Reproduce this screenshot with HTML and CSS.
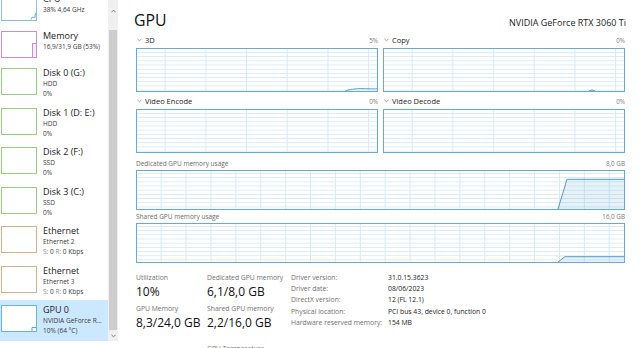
FILE: index.html
```html
<!DOCTYPE html>
<html>
<head>
<meta charset="utf-8">
<title>Task Manager - GPU</title>
<link rel="stylesheet" href="styles.css">
</head>
<body>
<div class="app">
  <aside class="sidebar">
    <div class="list">
      <div class="item short">
        <div class="thumb cpu"><svg viewBox="0 0 34 25"><polyline points="29,24.5 30,22.3 33,22.3 33.5,18"/></svg></div>
        <div class="txt"><div class="ttl">CPU</div><div class="sub">38% 4,64 GHz</div></div>
      </div>
      <div class="item mid">
        <div class="thumb mem"><svg viewBox="0 0 34 25"><rect x="30.5" y="11.5" width="4" height="14"/></svg></div>
        <div class="txt"><div class="ttl">Memory</div><div class="sub">16,9/31,9 GB (53%)</div></div>
      </div>
      <div class="item">
        <div class="thumb disk"></div>
        <div class="txt"><div class="ttl">Disk 0 (G:)</div><div class="sub">HDD</div><div class="sub">0%</div></div>
      </div>
      <div class="item">
        <div class="thumb disk"></div>
        <div class="txt"><div class="ttl">Disk 1 (D: E:)</div><div class="sub">HDD</div><div class="sub">0%</div></div>
      </div>
      <div class="item">
        <div class="thumb disk"></div>
        <div class="txt"><div class="ttl">Disk 2 (F:)</div><div class="sub">SSD</div><div class="sub">0%</div></div>
      </div>
      <div class="item">
        <div class="thumb disk"></div>
        <div class="txt"><div class="ttl">Disk 3 (C:)</div><div class="sub">SSD</div><div class="sub">0%</div></div>
      </div>
      <div class="item">
        <div class="thumb eth"></div>
        <div class="txt"><div class="ttl">Ethernet</div><div class="sub">Ethernet 2</div><div class="sub"><span class="dim">S:</span> 0 <span class="dim">R:</span> 0 Kbps</div></div>
      </div>
      <div class="item">
        <div class="thumb eth"></div>
        <div class="txt"><div class="ttl">Ethernet</div><div class="sub">Ethernet 3</div><div class="sub"><span class="dim">S:</span> 0 <span class="dim">R:</span> 0 Kbps</div></div>
      </div>
      <div class="item selected">
        <div class="thumb gpu"><svg viewBox="0 0 34 25"><polyline points="30,25 30,21.5 34,21.5"/></svg></div>
        <div class="txt"><div class="ttl">GPU 0</div><div class="sub">NVIDIA GeForce R...</div><div class="sub">10% (64 °C)</div></div>
      </div>
    </div>
    <div class="scrollbar">
      <div class="sb-btn up"><svg viewBox="0 0 6 4"><polyline points="0.5,3.5 3,1 5.5,3.5"/></svg></div>
      <div class="sb-track"><div class="sb-thumb"></div></div>
      <div class="sb-btn down"><svg viewBox="0 0 6 4"><polyline points="0.5,0.5 3,3 5.5,0.5"/></svg></div>
    </div>
  </aside>

  <main class="main">
    <header class="head">
      <h1 class="title">GPU</h1>
      <div class="model">NVIDIA GeForce RTX 3060 Ti</div>
    </header>

    <section class="engines">
      <div class="engine">
        <div class="elabel"><svg class="chev" viewBox="0 0 6 4"><polyline points="0.5,0.5 3,3 5.5,0.5"/></svg><span class="ename">3D</span><span class="pct">5%</span></div>
        <div class="graph"><svg class="plot" viewBox="0 0 240 42" preserveAspectRatio="none"><path class="line" d="M208 42 C212 40.5 218 39.6 226 39.7 S236 40 240 39.8"/></svg></div>
      </div>
      <div class="engine">
        <div class="elabel"><svg class="chev" viewBox="0 0 6 4"><polyline points="0.5,0.5 3,3 5.5,0.5"/></svg><span class="ename">Copy</span><span class="pct">0%</span></div>
        <div class="graph"><svg class="plot" viewBox="0 0 240 42" preserveAspectRatio="none"><path class="line" d="M205 42 L208 41 L211 42"/></svg></div>
      </div>
      <div class="engine">
        <div class="elabel"><svg class="chev" viewBox="0 0 6 4"><polyline points="0.5,0.5 3,3 5.5,0.5"/></svg><span class="ename">Video Encode</span><span class="pct">0%</span></div>
        <div class="graph"></div>
      </div>
      <div class="engine">
        <div class="elabel"><svg class="chev" viewBox="0 0 6 4"><polyline points="0.5,0.5 3,3 5.5,0.5"/></svg><span class="ename">Video Decode</span><span class="pct">0%</span></div>
        <div class="graph"></div>
      </div>
    </section>

    <section class="memgraphs">
      <div class="memblock">
        <div class="mlabel"><span>Dedicated GPU memory usage</span><span class="pct">8,0 GB</span></div>
        <div class="graph mgraph"><svg class="plot" viewBox="0 0 487 38" preserveAspectRatio="none"><polygon class="fill" points="421,38 430,8.3 487,8.3 487,38"/><polyline class="line" points="421,38 430,8.3 487,8.3"/></svg></div>
      </div>
      <div class="memblock">
        <div class="mlabel"><span>Shared GPU memory usage</span><span class="pct">16,0 GB</span></div>
        <div class="graph mgraph"><svg class="plot" viewBox="0 0 487 38" preserveAspectRatio="none"><polygon class="fill" points="421,38 428,32.7 487,32.7 487,38"/><polyline class="line" points="421,38 428,32.7 487,32.7"/></svg></div>
      </div>
    </section>

    <section class="stats">
      <div class="bigstats">
        <div class="stat"><div class="slabel">Utilization</div><div class="sval">10%</div></div>
        <div class="stat"><div class="slabel">Dedicated GPU memory</div><div class="sval">6,1/8,0 GB</div></div>
        <div class="stat"><div class="slabel">GPU Memory</div><div class="sval">8,3/24,0 GB</div></div>
        <div class="stat"><div class="slabel">Shared GPU memory</div><div class="sval">2,2/16,0 GB</div></div>
        <div class="stat"></div>
        <div class="stat later"><div class="slabel">GPU Temperature</div><div class="sval">64 °C</div></div>
      </div>
      <div class="info">
        <div class="ik">Driver version:</div><div class="iv">31.0.15.3623</div>
        <div class="ik">Driver date:</div><div class="iv">08/06/2023</div>
        <div class="ik">DirectX version:</div><div class="iv">12 (FL 12.1)</div>
        <div class="ik">Physical location:</div><div class="iv">PCI bus 43, device 0, function 0</div>
        <div class="ik">Hardware reserved memory:</div><div class="iv">154 MB</div>
      </div>
    </section>
  </main>
</div>
</body>
</html>
```

FILE: styles.css
```css
* { box-sizing: border-box; }
html, body { margin: 0; padding: 0; background: #fff; }
body {
  width: 640px;
  height: 348px;
  overflow: hidden;
  font-family: "Open Sans", "Noto Sans", sans-serif;
  color: #1b1b1b;
}
.app {
  display: flex;
  width: 640px;
  height: 348px;
}

/* ---------- Sidebar ---------- */
.sidebar {
  display: flex;
  width: 120px;
  height: 341px;
  padding-right: 2px;
  flex: none;
}
.list {
  width: 108px;
  height: 341px;
  overflow: hidden;
  display: flex;
  flex-direction: column;
}
.item {
  display: flex;
  align-items: flex-start;
  padding: 3px 0 0 1px;
  height: 39.5px;
  flex: none;
}
.item.short { height: 36.5px; margin-top: -11px; }
.item.mid { height: 37.5px; }
.item.selected {
  background: #cce8ff;
  flex: 1 1 auto;
  height: auto;
}
.thumb {
  width: 36px;
  height: 27px;
  margin-top: 2px;
  border: 1px solid #8fc1e6;
  background: #fff;
  flex: none;
}
.thumb svg { display: block; width: 34px; height: 25px; overflow: visible; }
.thumb svg polyline, .thumb svg rect { fill: none; stroke-width: 1; }
.thumb.cpu { border-color: #8dbfe6; }
.thumb.cpu polyline { stroke: #6aaee0; }
.thumb.mem { border-color: #c98ed6; }
.thumb.mem rect { stroke: #c98ed6; fill: #f7eefa; }
.thumb.disk { border-color: #95d07c; }
.thumb.eth { border-color: #dcae86; }
.thumb.gpu { border-color: #6eb1e0; }
.thumb.gpu polyline { stroke: #5aa6dc; }

.txt {
  margin-left: 6px;
  min-width: 0;
  white-space: nowrap;
}
.ttl {
  font-size: 9px;
  line-height: 13px;
  color: #1a1a1a;
}
.sub {
  font-size: 6.5px;
  line-height: 10px;
  color: #3a3a3a;
}
.sub .dim { color: #8a8a8a; }

.scrollbar {
  width: 10px;
  height: 341px;
  background: #f0f0f0;
  display: flex;
  flex-direction: column;
  flex: none;
}
.sb-btn {
  display: flex;
  align-items: center;
  justify-content: center;
  flex: none;
}
.sb-btn svg { width: 5px; height: 4px; display: block; }
.sb-btn polyline { fill: none; stroke: #606060; stroke-width: 1; }
.sb-btn.up { height: 22px; }
.sb-btn.down { height: 11px; }
.sb-track { flex: 1 1 auto; padding: 8px 1px 0; }
.sb-thumb { height: 300px; background: #cdcdcd; }

/* ---------- Main ---------- */
.main {
  flex: 1 1 auto;
  padding: 0 15px 0 16px;
  min-width: 0;
}
.head {
  display: flex;
  align-items: baseline;
  justify-content: space-between;
  height: 32px;
  padding-top: 10px;
}
.title {
  margin: 0 0 0 -2px;
  font-size: 15.8px;
  line-height: 20px;
  font-weight: 400;
  color: #111;
}
.model {
  font-size: 9px;
  color: #1a1a1a;
  margin-right: -1px;
}

.engines {
  display: grid;
  grid-template-columns: 1fr 1fr;
  column-gap: 5px;
  row-gap: 1px;
}
.elabel {
  display: flex;
  align-items: center;
  height: 16px;
}
.chev { width: 5px; height: 4px; margin: 0 3px 0 1px; flex: none; }
.chev polyline { fill: none; stroke: #8a8a8a; stroke-width: 0.9; }
.ename { font-size: 7.5px; color: #222; }
.pct { margin-left: auto; font-size: 6.3px; color: #7a7a7a; }

.graph {
  border: 1px solid #66aadb;
  background-color: #fff;
  background-image:
    linear-gradient(to right, #d9e9f5 1px, transparent 1px),
    linear-gradient(to bottom, #d9e9f5 1px, transparent 1px);
}
.engine .graph {
  height: 44px;
  background-size: 40.7px 100%, 100% 4.2px;
  background-position: 27.7px 0, 0 3px;
}
.memgraphs { margin-top: 4px; }
.mlabel {
  display: flex;
  align-items: center;
  height: 13px;
  font-size: 6.5px;
  color: #6a6a6a;
}
.mgraph {
  height: 40px;
  background-size: 24.9px 100%, 100% 4.2px;
  background-position: 23.7px 0, 0 2px;
}
.plot { display: block; width: 100%; height: 100%; }
.plot .line { fill: none; stroke: #4d9ad3; stroke-width: 1; vector-effect: non-scaling-stroke; }
.plot .fill { fill: rgba(17, 125, 187, 0.1); stroke: none; }

.stats {
  display: flex;
  padding-top: 9px;
}
.bigstats {
  display: grid;
  grid-template-columns: 71px 84px;
  row-gap: 2.5px;
  align-content: start;
}
.stat.later { margin-top: 9.5px; }
.slabel {
  font-size: 6.8px;
  line-height: 11px;
  color: #707070;
  white-space: nowrap;
}
.sval {
  font-size: 12px;
  line-height: 17px;
  color: #111;
  white-space: nowrap;
}
.info {
  display: grid;
  grid-template-columns: 97px auto;
  align-content: start;
  font-size: 6.8px;
  line-height: 11.2px;
}
.ik { color: #707070; white-space: nowrap; }
.iv { color: #222; white-space: nowrap; }
```
